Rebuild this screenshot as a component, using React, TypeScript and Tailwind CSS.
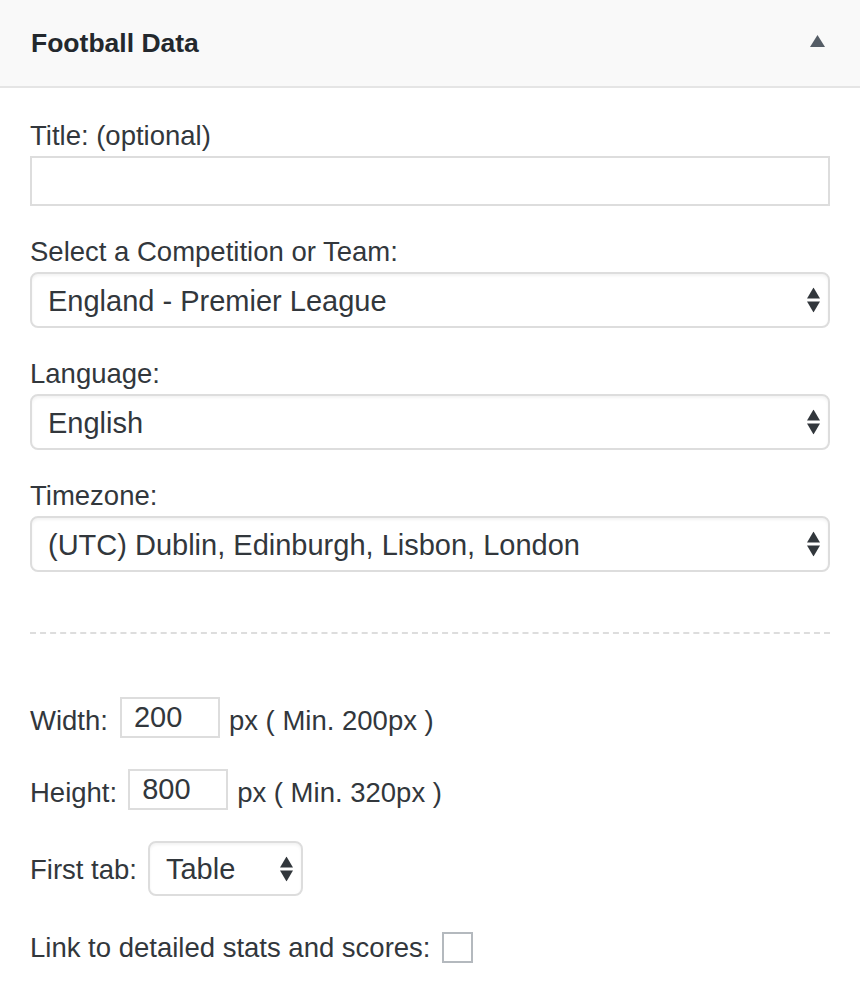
import type { ReactNode } from 'react'

function Arrows() {
  return (
    <svg width="13" height="25" viewBox="0 0 13 25" className="pointer-events-none absolute right-[10px] top-1/2 -translate-y-1/2">
      <polygon points="0,11 6.5,0 13,11" fill="#32373c" />
      <polygon points="0,14 13,14 6.5,25" fill="#32373c" />
    </svg>
  )
}

function Select({ value, className }: { value: string; className: string }) {
  return (
    <div className={`relative ${className}`}>
      <select
        defaultValue={value}
        className="h-full w-full appearance-none rounded-[8px] border-2 border-[#dddddd] bg-white pl-[16px] pr-[40px] pt-[3px] text-[29px] text-[#32373c] shadow-[inset_0_2px_3px_rgba(0,0,0,0.05)] outline-none"
      >
        <option>{value}</option>
      </select>
      <Arrows />
    </div>
  )
}

function Field({ label, children }: { label: string; children: ReactNode }) {
  return (
    <div className="mb-[30px]">
      <div className="mb-[5px] h-[31px] text-[27.5px] leading-[31px]">{label}</div>
      {children}
    </div>
  )
}

export default function App() {
  return (
    <div className="min-h-[994px] w-[860px] bg-white text-[#32373c]" style={{ fontFamily: '"Liberation Sans", Arial, sans-serif' }}>
      <div className="flex h-[88px] items-center justify-between border-b-2 border-[#e5e5e5] bg-[#f9f9f9] pl-[31px] pr-[35px]">
        <h3 className="pt-[2px] text-[26.5px] font-bold text-[#23282d]">Football Data</h3>
        <svg width="15" height="12" viewBox="0 0 15 12" className="mb-[5px]">
          <polygon points="0,12 7.5,0 15,12" fill="#555d66" />
        </svg>
      </div>

      <div className="px-[30px] pt-[32px]">
        <Field label="Title: (optional)">
          <input className="h-[50px] w-full border-2 border-[#dddddd] bg-white px-[10px] text-[28px] outline-none" />
        </Field>
        <Field label="Select a Competition or Team:">
          <Select value="England - Premier League" className="h-[56px] w-full" />
        </Field>
        <Field label="Language:">
          <Select value="English" className="h-[56px] w-full" />
        </Field>
        <div>
          <div className="mb-[5px] h-[31px] text-[27.5px] leading-[31px]">Timezone:</div>
          <Select value="(UTC) Dublin, Edinburgh, Lisbon, London" className="h-[56px] w-full" />
        </div>

        <div className="mt-[60px] border-t-2 border-dashed border-[#dddddd]" />

        <div className="mt-[63px] flex h-[41px] items-center text-[27.5px]">
          <span className="pt-[6px] leading-[31px]">Width:</span>
          <input defaultValue="200" className="ml-[12px] h-[41px] w-[100px] border-2 border-[#dddddd] px-[12px] text-[29px] text-[#32373c] outline-none" />
          <span className="ml-[9px] pt-[6px] leading-[31px]">px ( Min. 200px )</span>
        </div>

        <div className="mt-[31px] flex h-[41px] items-center text-[27.5px]">
          <span className="pt-[6px] leading-[31px]">Height:</span>
          <input defaultValue="800" className="ml-[11px] h-[41px] w-[100px] border-2 border-[#dddddd] px-[12px] text-[29px] text-[#32373c] outline-none" />
          <span className="ml-[9px] pt-[6px] leading-[31px]">px ( Min. 320px )</span>
        </div>

        <div className="mt-[31px] flex h-[55px] items-center text-[27.5px]">
          <span className="pt-[2px] leading-[31px]">First tab:</span>
          <Select value="Table" className="ml-[11px] h-[55px] w-[155px]" />
        </div>

        <div className="mt-[35px] flex h-[32px] items-center text-[27.5px]">
          <span className="leading-[31px]">Link to detailed stats and scores:</span>
          <span className="ml-[11px] h-[31px] w-[31px] border-2 border-[#b4b9be] bg-white" />
        </div>
      </div>
    </div>
  )
}
